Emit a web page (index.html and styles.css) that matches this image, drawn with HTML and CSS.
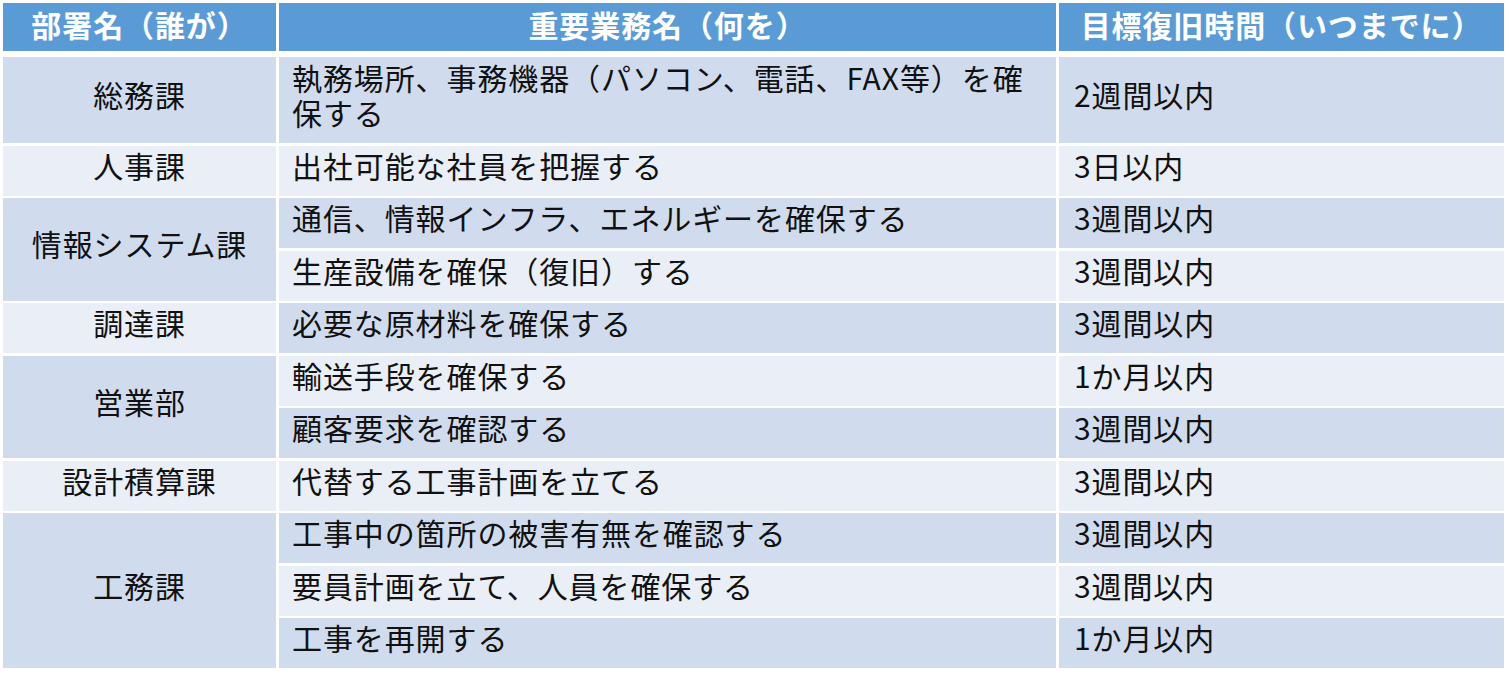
FILE: index.html
```html
<!DOCTYPE html>
<html lang="ja">
<head>
<meta charset="utf-8">
<title>重要業務と目標復旧時間</title>
<link rel="stylesheet" href="styles.css">
</head>
<body>
<div class="sheet">
  <div class="grid head">
    <div class="cell h">部署名（誰が）</div>
    <div class="cell h">重要業務名（何を）</div>
    <div class="cell h">目標復旧時間（いつまでに）</div>
  </div>
  <div class="grid body">
    <div class="cell c1 dark">総務課</div>
    <div class="cell c2 dark">執務場所、事務機器（パソコン、電話、FAX等）を確<br>保する</div>
    <div class="cell c3 dark">2週間以内</div>

    <div class="cell c1 light">人事課</div>
    <div class="cell c2 light">出社可能な社員を把握する</div>
    <div class="cell c3 light">3日以内</div>

    <div class="cell c1 dark span2">情報システム課</div>
    <div class="cell c2 dark">通信、情報インフラ、エネルギーを確保する</div>
    <div class="cell c3 dark">3週間以内</div>
    <div class="cell c2 light">生産設備を確保（復旧）する</div>
    <div class="cell c3 light">3週間以内</div>

    <div class="cell c1 light">調達課</div>
    <div class="cell c2 dark">必要な原材料を確保する</div>
    <div class="cell c3 dark">3週間以内</div>

    <div class="cell c1 dark span2">営業部</div>
    <div class="cell c2 light">輸送手段を確保する</div>
    <div class="cell c3 light">1か月以内</div>
    <div class="cell c2 dark">顧客要求を確認する</div>
    <div class="cell c3 dark">3週間以内</div>

    <div class="cell c1 light">設計積算課</div>
    <div class="cell c2 light">代替する工事計画を立てる</div>
    <div class="cell c3 light">3週間以内</div>

    <div class="cell c1 dark span3">工務課</div>
    <div class="cell c2 dark">工事中の箇所の被害有無を確認する</div>
    <div class="cell c3 dark">3週間以内</div>
    <div class="cell c2 light">要員計画を立て、人員を確保する</div>
    <div class="cell c3 light">3週間以内</div>
    <div class="cell c2 dark">工事を再開する</div>
    <div class="cell c3 dark">1か月以内</div>
  </div>
</div>
</body>
</html>
```

FILE: styles.css
```css
html, body {
  margin: 0;
  padding: 0;
  background: #ffffff;
}

body {
  font-family: "Noto Sans CJK JP", "Noto Sans", sans-serif;
  font-size: 30px;
  letter-spacing: 0.9px;
  color: #111111;
}

.sheet {
  padding: 3px 0 0 3px;
  width: 1501px;
}

.grid {
  display: grid;
  grid-template-columns: 273px 777px 445px;
  column-gap: 3px;
}

.head {
  grid-template-rows: 48px;
  margin-bottom: 6px;
}

.body {
  grid-template-rows: 86px repeat(10, 50px);
  row-gap: 2.5px;
}

.cell {
  display: flex;
  align-items: center;
  line-height: 35px;
  padding: 0 13px 11px;
  box-sizing: border-box;
  white-space: nowrap;
}

.h {
  background: #5b9bd5;
  color: #ffffff;
  font-weight: 700;
  justify-content: center;
  padding-bottom: 6px;
}

.c1 {
  grid-column: 1;
  justify-content: center;
}

.c2 {
  grid-column: 2;
}

.c3 {
  grid-column: 3;
  padding-left: 15px;
}

.span2 {
  grid-row: span 2;
}

.span3 {
  grid-row: span 3;
}

.dark {
  background: #d0dcee;
}

.light {
  background: #e9eef7;
}
```
